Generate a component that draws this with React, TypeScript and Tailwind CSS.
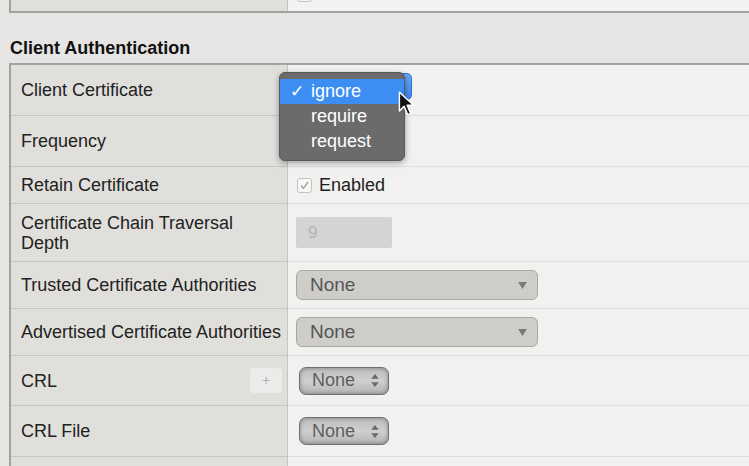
import React from "react";

const rows = [
  { label: "Client Certificate", h: "h-[51px]", kind: "blueSelect" },
  { label: "Frequency", h: "h-[51px]", kind: "empty" },
  { label: "Retain Certificate", h: "h-[37px]", kind: "checkbox" },
  { label: "Certificate Chain Traversal Depth", h: "h-[58px]", kind: "input", wrap: true },
  { label: "Trusted Certificate Authorities", h: "h-[47px]", kind: "wide" },
  { label: "Advertised Certificate Authorities", h: "h-[47px]", kind: "wide" },
  { label: "CRL", h: "h-[50px]", kind: "stepper", plus: true },
  { label: "CRL File", h: "h-[51px]", kind: "stepper" },
  { label: "", h: "h-[51px]", kind: "empty" },
];

function Checkbox() {
  return (
    <span className="flex h-[15px] w-[15px] items-center justify-center rounded-[3px] border border-[#c4c3c1] bg-[#f7f7f6]">
      <svg viewBox="0 0 12 12" className="h-[11px] w-[11px]">
        <path d="M2.5 6.5 L5 9 L9.5 2.5" fill="none" stroke="#9a9a9a" strokeWidth="1.4" strokeLinecap="round" strokeLinejoin="round" />
      </svg>
    </span>
  );
}

function WideSelect() {
  return (
    <div className="ml-[8px] flex h-[30px] w-[242px] items-center justify-between rounded-[6px] border border-[#a9a8a4] bg-[#cecdc9] pl-[13px] pr-[10px]">
      <span className="text-[19px] text-[#555555]">None</span>
      <svg viewBox="0 0 10 8" className="h-[7px] w-[9px]">
        <path d="M0 0 L10 0 L5 8 Z" fill="#7a7a7a" />
      </svg>
    </div>
  );
}

function StepperSelect() {
  return (
    <div className="ml-[11px] flex h-[28px] w-[90px] items-center justify-between rounded-[7px] border border-[#6f6f6f] bg-gradient-to-b from-[#bdbdbd] via-[#cfcfcf] to-[#b4b4b4] pl-[12px] pr-[9px] shadow-[inset_0_0_4px_rgba(0,0,0,0.35)]">
      <span className="text-[18px] text-[#5e5e5e]">None</span>
      <svg viewBox="0 0 8 14" className="h-[13px] w-[8px]">
        <path d="M4 0 L8 5 L0 5 Z M4 14 L8 9 L0 9 Z" fill="#6a6a6a" />
      </svg>
    </div>
  );
}

function RightCell({ kind }: { kind: string }) {
  if (kind === "blueSelect")
    return (
      <div className="ml-[9px] mt-[-7px] h-[27px] w-[115px] rounded-[5px] border border-[#2f6fcf] bg-gradient-to-b from-[#6aaaf7] to-[#3a86ee]" />
    );
  if (kind === "checkbox")
    return (
      <div className="ml-[9px] flex items-center gap-[7px]">
        <Checkbox />
        <span className="text-[18px] text-[#222222]">Enabled</span>
      </div>
    );
  if (kind === "input")
    return (
      <div className="ml-[8px] flex h-[31px] w-[96px] items-center rounded-[2px] bg-[#d5d4d2] pl-[12px] text-[17px] text-[#b4b4b2]">
        9
      </div>
    );
  if (kind === "wide") return <WideSelect />;
  if (kind === "stepper") return <StepperSelect />;
  return null;
}

export default function App() {
  return (
    <div className="relative h-[466px] w-[749px] overflow-hidden bg-[#e6e5e3] font-['Liberation_Sans',Arial,sans-serif]">
      {/* previous section, scrolled out of view */}
      <div className="ml-[9px] mt-[-38px] flex h-[51px] border-b-2 border-l-2 border-[#a3a2a0]">
        <div className="w-[277px] border-r border-[#c2c1be] bg-[#e0dfdc]" />
        <div className="flex flex-1 items-end bg-[#f3f2f0] pb-[9px] pl-[9px]">
          <span className="h-[15px] w-[15px] rounded-[3px] border border-[#c4c3c1] bg-[#f7f7f6]" />
        </div>
      </div>

      <h2 className="ml-[10px] mt-[25px] h-[20px] text-[18px] font-bold leading-[20px] text-[#111111]">
        Client Authentication
      </h2>

      <div className="ml-[9px] mt-[5px] border-l-2 border-t-2 border-[#a3a2a0]">
        {rows.map((r, i) => (
          <div key={i} className={`flex ${r.h}`}>
            <div className="flex w-[277px] items-center justify-between border-b border-r border-[#c6c5c2] bg-[#e0dfdc] pl-[10px] pr-[5px]">
              <span
                className={`text-[18px] leading-[20px] text-[#222222] ${r.wrap ? "max-w-[240px]" : "whitespace-nowrap"}`}
              >
                {r.label}
              </span>
              {r.plus && (
                <span className="flex h-[25px] w-[32px] items-center justify-center rounded-[4px] bg-[#ecebe9] text-[14px] text-[#b0b0ae]">
                  +
                </span>
              )}
            </div>
            <div className="flex flex-1 items-center border-b border-[#e0dfdd] bg-[#f2f1ef]">
              <RightCell kind={r.kind} />
            </div>
          </div>
        ))}
      </div>

      {/* open popup menu */}
      <div className="absolute left-[279px] top-[72px] h-[89px] w-[126px] rounded-[6px] border border-[#585858] bg-[#6b6b6b] pt-[6px] shadow-[0_2px_6px_rgba(0,0,0,0.35)]">
        {["ignore", "require", "request"].map((t, i) => (
          <div
            key={t}
            className={`relative flex h-[25px] items-center pl-[31px] text-[18px] text-white ${i === 0 ? "bg-[#3d8ef2]" : ""}`}
          >
            {i === 0 && <span className="absolute left-[10px] text-[17px]">✓</span>}
            {t}
          </div>
        ))}
      </div>

      {/* mouse pointer */}
      <svg viewBox="0 0 14 22" className="absolute left-[398px] top-[91px] h-[26px] w-[17px]">
        <path d="M1 1 L1 17 L5 13 L8 20 L10.5 19 L7.5 12 L13 12 Z" fill="#111" stroke="#fff" strokeWidth="1.2" strokeLinejoin="round" />
      </svg>
    </div>
  );
}
